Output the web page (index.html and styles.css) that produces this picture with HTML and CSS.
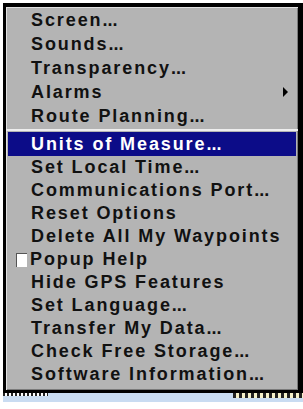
FILE: index.html
```html
<!DOCTYPE html>
<html lang="en">
  <head>
    <meta charset="UTF-8" />
    <meta name="viewport" content="width=device-width, initial-scale=1.0" />
    <title>Menu</title>
    <link rel="stylesheet" href="styles.css">
  </head>
  <body>
    <div class="frame">
      <div class="menu">
        <div class="group top">
          <div class="item">Screen<span class="dots">...</span></div>
          <div class="item">Sounds<span class="dots">...</span></div>
          <div class="item">Transparency<span class="dots">...</span></div>
          <div class="item">Alarms <span class="arrow"></span></div>
          <div class="item">Route Planning<span class="dots">...</span></div>
        </div>
        <div class="sep"></div>
        <div class="group">
          <div class="item active">Units of Measure<span class="dots">...</span></div>
          <div class="item">Set Local Time<span class="dots">...</span></div>
          <div class="item">Communications Port<span class="dots">...</span></div>
          <div class="item">Reset Options</div>
          <div class="item">Delete All My Waypoints</div>
          <div class="item"><span class="check"></span>Popup Help</div>
          <div class="item">Hide GPS Features</div>
          <div class="item">Set Language<span class="dots">...</span></div>
          <div class="item">Transfer My Data<span class="dots">...</span></div>
          <div class="item">Check Free Storage<span class="dots">...</span></div>
          <div class="item">Software Information<span class="dots">...</span></div>
        </div>
      </div>
    </div>
    <div class="strip">
      <span class="left-bits"></span>
      <span class="right-bits"></span>
    </div>
  </body>
</html>
```

FILE: styles.css
```css
body {
  margin: 0;
  background-color: #fff;
  font-family: "Liberation Sans", Arial, sans-serif;
}
.frame {
  margin: 3px 0 0 3px;
  border-top: 4px solid #000;
  border-left: 3px solid #000;
  border-right: 5px solid #000;
  border-bottom: 3px solid #000;
  background-color: #b4b4b4;
  height: 390px;
  box-sizing: border-box;
  box-shadow: inset 1px 1px 0 #e2e2e2, inset -1px -1px 0 #7a7a7a;
}
.menu {
  padding: 1px 2px 0 2px;
}
.group {
  display: flex;
  flex-direction: column;
}
.item {
  display: flex;
  align-items: center;
  height: 23px;
  padding-left: 23px;
  font-size: 18px;
  font-weight: bold;
  color: #111;
  letter-spacing: 1.9px;
  position: relative;
  white-space: nowrap;
}
.dots {
  letter-spacing: 0;
}
.top .item {
  height: 24px;
}
.item.active {
  height: 24px;
  background-color: #0c0c88;
  color: #fff;
}
.sep {
  height: 2px;
  margin: 1px -2px 1px -2px;
  background-color: #eeeeee;
}
.arrow {
  position: absolute;
  right: 8px;
  top: 7px;
  width: 0;
  height: 0;
  border-top: 5px solid transparent;
  border-bottom: 5px solid transparent;
  border-left: 5px solid #000;
}
.check {
  width: 10px;
  height: 13px;
  background-color: #fff;
  border-top: 1px solid #555;
  border-left: 1px solid #555;
  margin-left: -15px;
  margin-right: 3px;
}
.strip {
  height: 9px;
  margin-left: 3px;
  background-color: #c9dcf2;
  display: flex;
  justify-content: space-between;
}
.left-bits {
  width: 45px;
  height: 3px;
  background: repeating-linear-gradient(90deg, #222 0 2px, #fff 2px 4px);
}
.right-bits {
  width: 70px;
  height: 5px;
  background: repeating-linear-gradient(90deg, #222 0 3px, #f4f0c8 3px 6px);
}
```
